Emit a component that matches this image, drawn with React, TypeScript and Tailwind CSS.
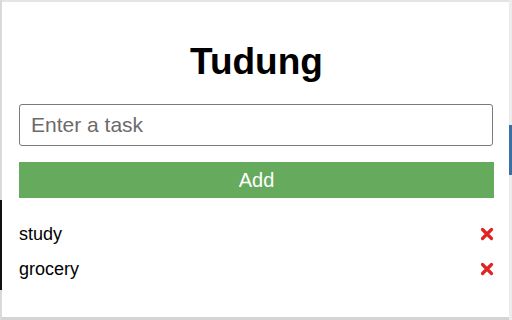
export default function App() {
  const tasks = ["study", "grocery"]

  return (
    <div className="flex h-[320px] w-[512px] overflow-hidden bg-white font-['Liberation_Sans',Arial,sans-serif] text-black">
      {/* left window edge */}
      <div className="flex w-[2px] flex-col">
        <div className="h-[200px] bg-[#d9d9d9]" />
        <div className="h-[90px] bg-[#111]" />
        <div className="flex-1 bg-[#d9d9d9]" />
      </div>

      <div className="flex flex-1 flex-col">
        <div className="h-[2px] bg-[#e4e4e4]" />

        <div className="flex flex-1 flex-col pl-[17px] pr-[15px] pt-[39px]">
          <h1 className="text-center text-[37px] leading-[42px] font-bold">Tudung</h1>

          <input
            type="text"
            placeholder="Enter a task"
            className="mt-[21px] mr-[1px] h-[42px] rounded-[3px] border border-[#7a7a7a] px-[11px] text-[21px] placeholder:text-[#6b6b6b] focus:outline-none"
          />

          <button className="mt-[16px] h-[36px] w-full bg-[#66aa5e] text-[20px] text-white">
            Add
          </button>

          {/* Task list */}
          <ul className="mt-[26px] flex flex-col gap-[14px]">
            {tasks.map((task) => (
              <li key={task} className="flex h-[21px] items-center justify-between text-[18px] leading-[21px]">
                <span>{task}</span>
                <svg width="14" height="14" viewBox="0 0 14 14" className="mt-[-1px]">
                  <path d="M2.5 2.5 L11.5 11.5 M11.5 2.5 L2.5 11.5" stroke="#e02424" strokeWidth="3.2" strokeLinecap="round" />
                </svg>
              </li>
            ))}
          </ul>
        </div>

        <div className="h-[3px] bg-[#d4d4d4]" />
      </div>

      {/* right window edge */}
      <div className="flex w-[3px] flex-col">
        <div className="h-[125px] bg-[#ececec]" />
        <div className="h-[50px] bg-[#3b6fa8]" />
        <div className="flex-1 bg-[#ececec]" />
      </div>
    </div>
  )
}
